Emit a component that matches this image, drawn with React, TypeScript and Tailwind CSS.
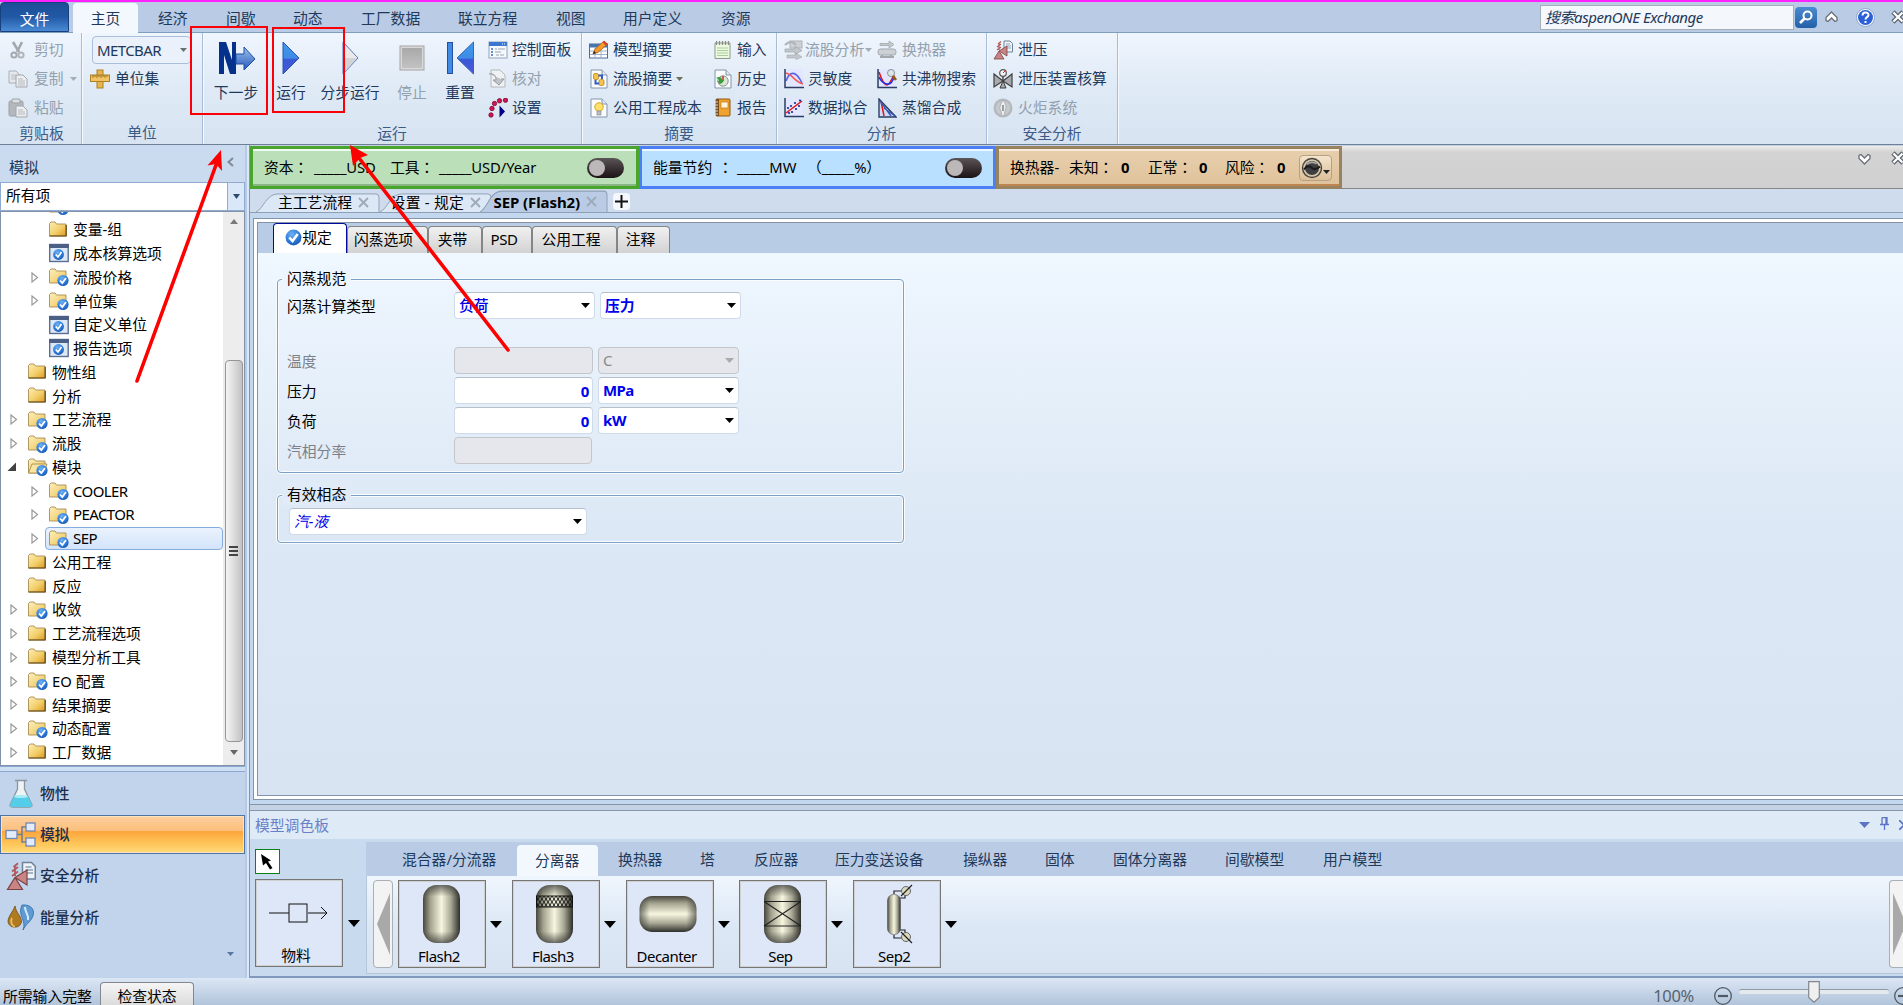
import React from "react";

type Kids = { children?: React.ReactNode };

/* ---------- small glyphs ---------- */

const Down = ({ c = "#000", w = 8, h = 5 }: { c?: string; w?: number; h?: number }) => (
  <svg width={w} height={h} viewBox="0 0 8 5" preserveAspectRatio="none" className="shrink-0">
    <path d="M0 0H8L4 5Z" fill={c} />
  </svg>
);

const Svg = ({ children, s = 20 }: Kids & { s?: number }) => (
  <svg width={s} height={s} viewBox="0 0 20 20" className="shrink-0">
    {children}
  </svg>
);

const Defs = () => (
  <svg width="0" height="0" className="absolute">
    <defs>
      <linearGradient id="folder" x1="0" y1="0" x2="1" y2="1">
        <stop offset="0" stopColor="#fdeeb5" />
        <stop offset=".55" stopColor="#f3cf6b" />
        <stop offset="1" stopColor="#dd9a1c" />
      </linearGradient>
      <linearGradient id="folderLight" x1="0" y1="0" x2="1" y2="1">
        <stop offset="0" stopColor="#fdf0bd" />
        <stop offset="1" stopColor="#ecc252" />
      </linearGradient>
      <radialGradient id="badge" cx=".4" cy=".3" r=".8">
        <stop offset="0" stopColor="#6fb2f3" />
        <stop offset=".6" stopColor="#2a78d8" />
        <stop offset="1" stopColor="#1650a8" />
      </radialGradient>
      <linearGradient id="play" x1="0" y1="0" x2="0" y2="1">
        <stop offset="0" stopColor="#3d9be8" />
        <stop offset=".5" stopColor="#3f8be6" />
        <stop offset=".55" stopColor="#3a58d4" />
        <stop offset="1" stopColor="#4a58d8" />
      </linearGradient>
      <linearGradient id="arrowBlue" x1="0" y1="0" x2="0" y2="1">
        <stop offset="0" stopColor="#9cc3f0" />
        <stop offset="1" stopColor="#2656b8" />
      </linearGradient>
      <linearGradient id="stop" x1="0" y1="0" x2="0" y2="1">
        <stop offset="0" stopColor="#a9a9a9" />
        <stop offset="1" stopColor="#c2c2c2" />
      </linearGradient>
      <linearGradient id="metalH" x1="0" y1="0" x2="1" y2="0">
        <stop offset="0" stopColor="#45453d" />
        <stop offset=".2" stopColor="#a3a38f" />
        <stop offset=".5" stopColor="#f7f7e0" />
        <stop offset=".75" stopColor="#a9a996" />
        <stop offset="1" stopColor="#2e2e2a" />
      </linearGradient>
      <linearGradient id="metalV" x1="0" y1="0" x2="0" y2="1">
        <stop offset="0" stopColor="#45453d" />
        <stop offset=".2" stopColor="#a3a38f" />
        <stop offset=".5" stopColor="#f7f7e0" />
        <stop offset=".75" stopColor="#a9a996" />
        <stop offset="1" stopColor="#2e2e2a" />
      </linearGradient>
      <linearGradient id="shadeEnds" x1="0" y1="0" x2="0" y2="1">
        <stop offset="0" stopColor="#222" stopOpacity=".65" />
        <stop offset=".2" stopColor="#222" stopOpacity="0" />
        <stop offset=".8" stopColor="#222" stopOpacity="0" />
        <stop offset="1" stopColor="#222" stopOpacity=".65" />
      </linearGradient>
      <linearGradient id="shadeSides" x1="0" y1="0" x2="1" y2="0">
        <stop offset="0" stopColor="#222" stopOpacity=".6" />
        <stop offset=".18" stopColor="#222" stopOpacity="0" />
        <stop offset=".82" stopColor="#222" stopOpacity="0" />
        <stop offset="1" stopColor="#222" stopOpacity=".6" />
      </linearGradient>
      <pattern id="mesh" width="4" height="6" patternUnits="userSpaceOnUse">
        <path d="M0 0L2 3L0 6M4 0L2 3L4 6" stroke="#111" strokeWidth=".9" fill="none" />
      </pattern>
    </defs>
  </svg>
);

/* ---------- ribbon icons ---------- */

const Cut = () => (
  <Svg>
    <path d="M5 2L11 12M14 2L9 12" stroke="#a3a8ad" strokeWidth="2.6" />
    <circle cx="6" cy="15" r="2.6" fill="none" stroke="#a3a8ad" strokeWidth="2" />
    <circle cx="13" cy="15" r="2.6" fill="none" stroke="#b1b5b9" strokeWidth="2" />
  </Svg>
);
const Copy = () => (
  <Svg>
    <path d="M1 2H8L11 5V14H1Z" fill="#e6e9ec" stroke="#a9afb5" />
    <path d="M3 6H8M3 8H8M3 10H8" stroke="#b9bec3" />
    <path d="M8 6H15L19 10V18H8Z" fill="#eceef0" stroke="#a2a8ae" />
    <path d="M10 10H15M10 12H17M10 14H17M10 16H17" stroke="#b4b9be" />
  </Svg>
);
const Paste = () => (
  <Svg>
    <rect x="1" y="3" width="14" height="15" rx="1.5" fill="#b4b8bc" stroke="#9a9fa4" />
    <rect x="4" y="1" width="8" height="4" rx="1" fill="#dcdfe2" stroke="#9a9fa4" />
    <path d="M8 8H15L19 12V19H8Z" fill="#eceef0" stroke="#a2a8ae" />
    <path d="M10 12H15M10 14H17M10 16H17" stroke="#b4b9be" />
  </Svg>
);
const Units = () => (
  <Svg>
    <rect x="7" y="1" width="6" height="18" fill="#e6b550" stroke="#b07f22" />
    <rect x="0.5" y="6" width="19" height="6.5" fill="#f0c465" stroke="#b07f22" />
    <path d="M3 6V9M5 6V8M7 6V9M9 6V8M11 6V9M13 6V8M15 6V9M17 6V8" stroke="#8b6214" strokeWidth=".8" />
  </Svg>
);
const Panel = () => (
  <Svg>
    <rect x="1" y="2" width="18" height="16" fill="#f5f8fd" stroke="#8fa3bf" />
    <rect x="1" y="2" width="18" height="4" fill="#3a77d0" />
    <path d="M14 4H15M16 4H17" stroke="#fff" />
    <path d="M3 9H5M3 12H5M3 15H5" stroke="#3c6cc0" strokeWidth="1.6" />
    <path d="M7 9H9M10 9H17M7 12H13M8 15H11M12 15H16" stroke="#9aa3ad" />
  </Svg>
);
const Reconcile = () => (
  <Svg>
    <path d="M3 1H12L17 6V18H3Z" fill="#eff1f3" stroke="#b3b8bd" />
    <path d="M1 5C6 4 8 7 8 11H5L11 16L16 10H13" fill="#c0c4c8" stroke="#989da2" />
  </Svg>
);
const Setup = () => (
  <Svg>
    <g fill="#d4145a" stroke="#7a0b2a" strokeWidth=".8">
      <circle cx="3" cy="17" r="2.2" />
      <circle cx="4" cy="10.5" r="2.2" />
      <circle cx="6.5" cy="5.5" r="2.2" />
      <circle cx="11.5" cy="2.8" r="2.2" />
      <circle cx="17.5" cy="2.2" r="2.2" />
    </g>
    <path d="M11.5 7.5L17 13.5L11.5 19.5Z" fill="#00007f" />
  </Svg>
);
const ModelSummary = () => (
  <Svg>
    <rect x="0.5" y="4" width="18" height="14" fill="#fff" stroke="#4a6d9a" />
    <rect x="0.5" y="4" width="18" height="3.5" fill="#4775b0" />
    <path d="M1 11H18M1 14.500H18M6 8V18M12 8V18" stroke="#9db3cf" />
    <path d="M4 14L6 9L15 1L18.500 4L9 12.500Z" fill="#f59a2a" stroke="#a8600f" strokeWidth=".8" />
    <path d="M15 1L18.500 4L17 5.500L13.500 2.300Z" fill="#d63a34" />
    <path d="M4 14L5 11L7 13Z" fill="#222" />
  </Svg>
);
const Page = ({ children }: Kids) => (
  <Svg>
    <path d="M2 1H13L18 6V19H2Z" fill="#fbfcfe" stroke="#8296ac" />
    <path d="M13 1V6H18" fill="#dfe7f0" stroke="#8296ac" />
    {children}
  </Svg>
);
const StreamSummary = () => (
  <Page>
    <rect x="4.500" y="4.500" width="5" height="6" rx="1.500" fill="#f6c445" stroke="#a87a18" strokeWidth=".7" />
    <rect x="10" y="10.500" width="5" height="6" rx="1.500" fill="#f6c445" stroke="#a87a18" strokeWidth=".7" />
    <path d="M9.500 6.500H13V10M10 14.500H6.500V11" fill="none" stroke="#3158c4" strokeWidth="2" />
  </Page>
);
const UtilityCost = () => (
  <Page>
    <circle cx="10" cy="9" r="4.200" fill="#ffe26b" stroke="#d9a520" />
    <rect x="8" y="13" width="4" height="4" fill="#b9bec6" stroke="#7c828a" strokeWidth=".6" />
  </Page>
);
const InputPad = () => (
  <Svg>
    <path d="M2 3H17V18.500H2Z" fill="#edf8e2" stroke="#8b9a86" />
    <path d="M4 8H15M4 10.500H15M4 13H15M4 15.500H15" stroke="#a8cf9b" />
    <path d="M3.500 5V1M6.500 5V1M9.500 5V1M12.500 5V1M15.500 5V1" stroke="#8d8d85" strokeWidth="1.200" />
  </Svg>
);
const History = () => (
  <Page>
    <circle cx="10" cy="12" r="5.200" fill="#d9e6d9" stroke="#8a9a8a" />
    <path d="M10 12V7M10 12L6 14" stroke="#c22" strokeWidth="1.400" />
    <path d="M3 9C6 7 9 8 9 11L11 11L8 15L4 12H6C6 10 5 10 3 9Z" fill="#2da33a" />
  </Page>
);
const Report = () => (
  <Svg>
    <rect x="3" y="1" width="14" height="17" rx="1" fill="#f0a22e" stroke="#8b5a17" />
    <rect x="3" y="1" width="3" height="17" fill="#7c4f1a" />
    <rect x="8" y="4" width="7" height="6" fill="#fff5dd" stroke="#c17a1c" strokeWidth=".7" />
    <path d="M2 4H5M2 7H5M2 10H5M2 13H5M2 16H5" stroke="#ddd" />
  </Svg>
);
const StreamAnalysis = () => (
  <Svg>
    <rect x="6" y="1" width="12" height="7" fill="#cdd1d5" stroke="#adb2b7" />
    <path d="M1 5C5 1 9 1 12 5" fill="none" stroke="#b0b4b8" strokeWidth="2" />
    <path d="M1 9H11V6.500L18 10.500L11 14.500V12H1Z" fill="#c4c8cc" stroke="#a3a8ad" strokeWidth=".8" />
    <path d="M3 15H12V13L18 17L12 19.500V18H3Z" fill="#c4c8cc" stroke="#a3a8ad" strokeWidth=".6" />
  </Svg>
);
const Exchanger = () => (
  <Svg>
    <path d="M3 3.500H12V1L17 4.500L12 8V5.500H3Z" fill="#c4c8cc" stroke="#a3a8ad" strokeWidth=".8" />
    <rect x="1" y="9" width="18" height="6" rx="2.500" fill="#cdd1d5" stroke="#a3a8ad" />
    <path d="M5 15V18M14 15V18M3 17H17" stroke="#a3a8ad" strokeWidth="2" />
  </Svg>
);
const Chart = ({ children }: Kids) => (
  <Svg>
    <rect x="1" y="0" width="18" height="18" fill="#e3e6ff" />
    {children}
    <path d="M1 0V18.500H20" fill="none" stroke="#2a3f63" strokeWidth="1.500" />
  </Svg>
);
const Sensitivity = () => (
  <Chart>
    <path d="M2 12C6 1 12 2 18 14" fill="none" stroke="#5a62e8" strokeWidth="1.600" />
    <path d="M2 4C8 5 11 13 19 15" fill="none" stroke="#f05a5a" strokeWidth="1.600" />
  </Chart>
);
const DataFit = () => (
  <Chart>
    <path d="M2 15L18 3" stroke="#e01414" strokeWidth="1.500" />
    <g fill="#1d2a9b">
      <circle cx="4" cy="10" r="1.100" />
      <circle cx="7" cy="8" r="1.100" />
      <circle cx="8" cy="14" r="1.100" />
      <circle cx="11" cy="5" r="1.100" />
      <circle cx="12" cy="11" r="1.100" />
      <circle cx="15" cy="8" r="1.100" />
      <circle cx="16" cy="2.500" r="1.100" />
      <circle cx="5" cy="15" r="1.100" />
    </g>
  </Chart>
);
const Azeotrope = () => (
  <Chart>
    <path d="M2 3C5 12 8 16 10 16C12 16 14 12 17 6" fill="none" stroke="#e01414" strokeWidth="1.600" />
    <path d="M2 8C5 15 15 20 17 7" fill="none" stroke="#2430e8" strokeWidth="1.600" />
    <circle cx="14" cy="4" r="3.500" fill="#d8e8e4" stroke="#8a8f96" />
    <path d="M16 7L19 11" stroke="#8a6314" strokeWidth="2.500" />
  </Chart>
);
const Distil = () => (
  <Svg>
    <path d="M2 1V19H19Z" fill="#cfdcf5" stroke="#2a3f63" strokeWidth="1.400" />
    <path d="M4 3L7 18" stroke="#e01414" strokeWidth="1.500" />
    <path d="M3 3L14 18M7 10L18 18" stroke="#3558b8" strokeWidth="1.300" />
  </Svg>
);
const Relief = ({ s = 20 }: { s?: number }) => (
  <Svg s={s}>
    <path d="M11 1H17L19.500 3.500V12H11Z" fill="#eef3f9" stroke="#6d8296" />
    <path d="M13 4H17M13 6H18M13 8H18" stroke="#8da0b4" strokeWidth=".9" />
    <path d="M4 10L8 7M4 7L8 4M5 4L8 1.500M6 10V3" stroke="#b15a5a" strokeWidth="1.200" />
    <path d="M6 11L14 6V16L6 11L11 19H1Z" fill="#c98585" stroke="#7d4242" strokeWidth=".8" />
  </Svg>
);
const ReliefCheck = () => (
  <Svg>
    <path d="M10 7V12" stroke="#444" strokeWidth="1.500" />
    <path d="M1 5L10 12L19 5V18L10 12L1 18Z" fill="#a9aaac" stroke="#3e3f41" strokeWidth="1.200" />
    <path d="M10 12L13 19H7Z" fill="#a9aaac" stroke="#3e3f41" />
    <circle cx="10" cy="4" r="3.300" fill="#f4f4f4" stroke="#555" strokeWidth="1.200" />
    <path d="M10 4L12 2" stroke="#d22" />
  </Svg>
);
const Flare = () => (
  <Svg>
    <circle cx="10" cy="10" r="9.500" fill="#b5b9bd" />
    <circle cx="10" cy="10" r="7" fill="#c6cacd" />
    <path d="M10 2C14 7 13 10 12 13L11 18H9L8 13C6 10 7 7 10 2Z" fill="#eceeef" stroke="#9ca1a6" strokeWidth=".7" />
    <path d="M10 7V13" stroke="#999ea3" strokeWidth="2" />
  </Svg>
);

/* ---------- ribbon ---------- */

const Small = ({
  icon,
  label,
  off,
  drop,
  gap = "gap-[5px]",
}: {
  icon: React.ReactNode;
  label: string;
  off?: boolean;
  drop?: boolean;
  gap?: string;
}) => (
  <div className={`flex h-[29px] items-center ${gap} ${off ? "text-[#93a0ad]" : "text-[#1e395b]"}`}>
    {icon}
    <span className="leading-none">{label}</span>
    {drop && <Down c={off ? "#a3adb7" : "#6b6f5f"} w={7} h={4} />}
  </div>
);

const Group = ({ label, w, children }: Kids & { label: string; w: string }) => (
  <div className={`flex h-full shrink-0 flex-col border-r border-r-[#a9bcd6] shadow-[1px_0_0_#f6faff] ${w}`}>
    <div className="flex h-[88px] pt-[2px]">{children}</div>
    <div className="text-center leading-[24px] text-[#3b5a86]">{label}</div>
  </div>
);

const Big = ({ icon, label, w, off }: { icon: React.ReactNode; label: string; w: string; off?: boolean }) => (
  <div className={`flex shrink-0 flex-col items-center ${w}`}>
    <div className="flex h-[44px] items-center pt-[2px]">{icon}</div>
    <span className={`whitespace-nowrap leading-[26px] ${off ? "text-[#93a0ad]" : "text-[#1e395b]"}`}>{label}</span>
  </div>
);

const NextIcon = () => (
  <svg width="40" height="34" viewBox="0 0 40 34">
    <path d="M3 1H10L16 19V1H20V33H14L8 14V33H3Z" fill="#05308c" />
    <path d="M20 13H28V6L39 18L28 29V23H20Z" fill="url(#arrowBlue)" stroke="#1c4da6" />
  </svg>
);
const PlayIcon = () => (
  <svg width="18" height="34" viewBox="0 0 18 34">
    <path d="M1 1L17 17L1 33Z" fill="url(#play)" stroke="#2b52b4" />
  </svg>
);
const StepIcon = () => (
  <svg width="18" height="34" viewBox="0 0 18 34">
    <path d="M2 1L17 17L2 33Z" fill="#e9e9ea" stroke="#5577c4" />
    <path d="M2 17H16L2 32Z" fill="#d3d3d6" />
  </svg>
);
const StopIcon = () => (
  <svg width="26" height="26" viewBox="0 0 26 26">
    <rect x="1" y="1" width="24" height="24" fill="#d9d9d9" stroke="#a5a5a5" />
    <rect x="3" y="3" width="20" height="20" fill="url(#stop)" />
  </svg>
);
const ResetIcon = () => (
  <svg width="29" height="34" viewBox="0 0 29 34">
    <rect x="1.500" y="1.500" width="5" height="31" fill="#3f8be6" stroke="#24509f" />
    <path d="M27.500 1L11 17L27.500 33Z" fill="url(#play)" stroke="#3b63bd" />
  </svg>
);

const Ribbon = () => (
  <div className="flex h-[112px] shrink-0 border-b border-b-[#6f7f95] bg-gradient-to-b from-[#eff5fd] via-[#dfeaf6] to-[#d7e3f1]">
    <Group label="剪贴板" w="w-[82px] pl-[2px]">
      <div className="pl-[6px]">
        <Small icon={<Cut />} label="剪切" off gap="gap-[6px]" />
        <Small icon={<Copy />} label="复制" off drop gap="gap-[6px]" />
        <Small icon={<Paste />} label="粘贴" off gap="gap-[6px]" />
      </div>
    </Group>
    <Group label="单位" w="w-[121px]">
      <div className="pl-[8px]">
        <div className="ml-[2px] mt-[1px] flex h-[28px] w-[99px] items-center justify-between rounded-sm border border-[#a9bedb] bg-[#eaf1fa] pl-[4px] pr-[3px] text-[15px] tracking-[-0.6px] text-[#1e395b]">
          METCBAR
          <Down c="#6b6f6f" w={7} h={4} />
        </div>
        <Small icon={<Units />} label="单位集" />
      </div>
    </Group>
    <Group label="运行" w="w-[379px]">
      <Big w="ml-[3px] w-[60px]" icon={<NextIcon />} label="下一步" />
      <Big w="ml-[9px] w-[32px]" icon={<PlayIcon />} label="运行" />
      <Big w="ml-[13px] w-[60px]" icon={<StepIcon />} label="分步运行" />
      <Big w="ml-[15px] w-[34px]" icon={<StopIcon />} label="停止" off />
      <Big w="ml-[14px] w-[34px]" icon={<ResetIcon />} label="重置" />
      <div className="ml-[11px]">
        <Small icon={<Panel />} label="控制面板" gap="gap-1" />
        <Small icon={<Reconcile />} label="核对" off gap="gap-1" />
        <Small icon={<Setup />} label="设置" gap="gap-1" />
      </div>
    </Group>
    <Group label="摘要" w="w-[195px]">
      <div className="w-[124px] pl-[7px]">
        <Small icon={<ModelSummary />} label="模型摘要" gap="gap-1" />
        <Small icon={<StreamSummary />} label="流股摘要" drop gap="gap-1" />
        <Small icon={<UtilityCost />} label="公用工程成本" gap="gap-1" />
      </div>
      <div className="pl-[7px]">
        <Small icon={<InputPad />} label="输入" gap="gap-1" />
        <Small icon={<History />} label="历史" gap="gap-1" />
        <Small icon={<Report />} label="报告" gap="gap-1" />
      </div>
    </Group>
    <Group label="分析" w="w-[210px]">
      <div className="w-[100px] pl-[7px]">
        <Small icon={<StreamAnalysis />} label="流股分析" off drop gap="gap-px" />
        <Small icon={<Sensitivity />} label="灵敏度" gap="gap-1" />
        <Small icon={<DataFit />} label="数据拟合" gap="gap-1" />
      </div>
      <div>
        <Small icon={<Exchanger />} label="换热器" off />
        <Small icon={<Azeotrope />} label="共沸物搜索" />
        <Small icon={<Distil />} label="蒸馏合成" />
      </div>
    </Group>
    <Group label="安全分析" w="w-[131px]">
      <div className="pl-[6px]">
        <Small icon={<Relief />} label="泄压" />
        <Small icon={<ReliefCheck />} label="泄压装置核算" />
        <Small icon={<Flare />} label="火炬系统" off />
      </div>
    </Group>
  </div>
);

const Cross = ({ w = 14 }: { w?: number }) => (
  <svg width={w} height={w} viewBox="0 0 14 14" className="shrink-0">
    <path d="M2 2L12 12M12 2L2 12" stroke="#5f6670" strokeWidth="4.600" />
    <path d="M2.500 2.500L11.500 11.500M11.500 2.500L2.500 11.500" stroke="#fff" strokeWidth="2.200" />
  </svg>
);
const Chevron = ({ down }: { down?: boolean }) => (
  <svg width="13" height="12" viewBox="0 0 13 12" className={down ? "shrink-0 rotate-180" : "shrink-0"}>
    <path d="M6.500 1L12 6.500V9.500L10 10.500L6.500 7L3 10.500L1 9.500V6.500Z" fill="#fff" stroke="#6a6f78" strokeWidth="1.300" />
  </svg>
);

const TabBar = () => (
  <div className="flex h-[31px] shrink-0 border-b border-b-[#7f9dbf] bg-[#bacce5] text-[#1e395b]">
    <div className="h-[30px] w-[69px] rounded-t-sm border border-[#17407e] bg-gradient-to-b from-[#1d4e96] via-[#2159a6] to-[#4a8ad4] pt-px text-center leading-[30px] text-white">
      文件
    </div>
    <div className="ml-1 mt-px h-[30px] w-[65px] rounded-t-sm bg-[#f3f8fe] text-center leading-[31px]">主页</div>
    <div className="flex whitespace-nowrap leading-[33px]">
      <span className="ml-[20px] w-[68px]">经济</span>
      <span className="w-[67px]">间歇</span>
      <span className="w-[68px]">动态</span>
      <span className="w-[97px]">工厂数据</span>
      <span className="w-[98px]">联立方程</span>
      <span className="w-[67px]">视图</span>
      <span className="w-[98px]">用户定义</span>
      <span>资源</span>
    </div>
    <div className="ml-auto flex items-center">
      <div className="mt-px h-[25px] w-[254px] border border-[#a7adb5] bg-[#f4f7fb] pl-[4px] text-[15px] italic leading-[22px] tracking-[-0.45px]">
        搜索aspenONE Exchange
      </div>
      <div className="ml-px flex h-[21px] w-[22px] items-center justify-center rounded-sm bg-gradient-to-b from-[#4b8bd0] to-[#2460a8]">
        <svg width="16" height="16" viewBox="0 0 16 16">
          <circle cx="9.500" cy="6.500" r="4" fill="none" stroke="#fff" strokeWidth="2" />
          <path d="M6.500 9.500L2 14" stroke="#fff" strokeWidth="2.600" />
        </svg>
      </div>
      <div className="ml-[8px] flex">
        <Chevron />
      </div>
      <svg width="19" height="19" viewBox="0 0 19 19" className="ml-[18px]">
        <circle cx="9.500" cy="9.500" r="9" fill="#fff" stroke="#8aa4d4" />
        <circle cx="9.500" cy="9.500" r="7.500" fill="#2a5fd8" />
        <path d="M6.500 7.500C6.500 3.500 12.500 3.500 12.500 7C12.500 9.200 9.500 9 9.500 11.500M9.500 13V15" fill="none" stroke="#fff" strokeWidth="2" />
      </svg>
      <div className="-mr-[2px] ml-[16px] -mt-px">
        <Cross />
      </div>
    </div>
  </div>
);

/* ---------- navigation tree ---------- */

const Badge = () => (
  <g>
    <circle cx="14" cy="13.500" r="5.600" fill="url(#badge)" />
    <path d="M11 13.500L13.300 16L17 11" fill="none" stroke="#fff" strokeWidth="1.800" />
  </g>
);

const TreeIcon = ({ kind }: { kind: string }) => (
  <svg width="20" height="20" viewBox="0 0 20 20" className="shrink-0">
    {kind === "form" ? (
      <g>
        <rect x=".7" y="1.500" width="18.500" height="17" fill="#dde8f7" stroke="#5b6f92" strokeWidth="1.400" />
        <rect x="0" y="1" width="20" height="4" fill="#4c6086" />
        <circle cx="9.500" cy="11.500" r="5.400" fill="url(#badge)" />
        <path d="M6.700 11.500L9 14L12.500 9" fill="none" stroke="#fff" strokeWidth="1.700" />
      </g>
    ) : (
      <g>
        <path
          d="M.5 3.500L2 2H6L7.500 4H17V16H.5Z"
          fill={kind === "plain" ? "url(#folder)" : "url(#folderLight)"}
          stroke="#a98d52"
          strokeWidth=".9"
        />
        {kind === "plain" && <path d="M.5 16H17.200V5" fill="none" stroke="#5d4413" strokeWidth="1.200" />}
        {kind === "open" && <path d="M.5 16L4 7H19L16 16Z" fill="#fbe6a0" stroke="#a98d52" strokeWidth=".9" />}
        {kind !== "plain" && <Badge />}
      </g>
    )}
  </svg>
);

type Node = [level: number, mark: string, kind: string, label: string];
const NODES: Node[] = [
  [2, "", "check", ""],
  [2, "", "plain", "变量-组"],
  [2, "", "form", "成本核算选项"],
  [2, ">", "check", "流股价格"],
  [2, ">", "check", "单位集"],
  [2, "", "form", "自定义单位"],
  [2, "", "form", "报告选项"],
  [1, "", "plain", "物性组"],
  [1, "", "plain", "分析"],
  [1, ">", "check", "工艺流程"],
  [1, ">", "check", "流股"],
  [1, "v", "open", "模块"],
  [2, ">", "check", "COOLER"],
  [2, ">", "check", "PEACTOR"],
  [2, ">", "check", "SEP"],
  [1, "", "plain", "公用工程"],
  [1, "", "plain", "反应"],
  [1, ">", "check", "收敛"],
  [1, ">", "plain", "工艺流程选项"],
  [1, ">", "plain", "模型分析工具"],
  [1, ">", "check", "EO 配置"],
  [1, ">", "plain", "结果摘要"],
  [1, ">", "check", "动态配置"],
  [1, ">", "plain", "工厂数据"],
];

const Tree = () => (
  <div className="flex h-[555px] shrink-0 overflow-hidden border border-[#8292a8] bg-white">
    <div className="-mt-[18px] w-[222px] shrink-0">
      {NODES.map(([level, mark, kind, label], i) => (
        <div key={i} className="flex h-[23.78px] items-center">
          <div className={level === 1 ? "flex w-[24px] shrink-0 pl-[9px]" : "flex w-[44px] shrink-0 pl-[30px]"}>
            {mark === ">" && (
              <svg width="8" height="11" viewBox="0 0 8 11">
                <path d="M1 1L6.500 5.500L1 10Z" fill="#fff" stroke="#9a9a9a" strokeWidth="1.200" />
              </svg>
            )}
            {mark === "v" && (
              <svg width="10" height="10" viewBox="0 0 10 10" className="-ml-[3px]">
                <path d="M9 0.500V9H0.500Z" fill="#404040" />
              </svg>
            )}
          </div>
          <div
            className={
              label === "SEP"
                ? "flex h-[23px] flex-1 items-center gap-[4px] rounded-sm border border-[#84acdd] bg-gradient-to-b from-[#eaf2fd] to-[#d3e4fb] pl-[3px]"
                : level === 2
                  ? "flex flex-1 items-center gap-[4px] pl-[4px]"
                  : "flex flex-1 items-center gap-[4px] pl-[3px]"
            }
          >
            <TreeIcon kind={kind} />
            <span className={/^[A-Z]+$/.test(label) ? "text-[15px] leading-none tracking-[-0.6px]" : "leading-none"}>
              {label}
            </span>
          </div>
        </div>
      ))}
    </div>
    <div className="flex flex-1 flex-col items-center bg-[#ededed]">
      <div className="flex h-[148px] pt-[7px]">
        <svg width="8" height="5" viewBox="0 0 8 5">
          <path d="M0 5H8L4 0Z" fill="#7a7a7a" />
        </svg>
      </div>
      <div className="flex h-[382px] w-[18px] flex-col items-center justify-center gap-[2px] rounded-sm border border-[#959595] bg-gradient-to-r from-[#f5f5f5] via-[#dcdcdc] to-[#c2c2c6]">
        <i className="h-[2px] w-[9px] bg-[#444]" />
        <i className="h-[2px] w-[9px] bg-[#444]" />
        <i className="h-[2px] w-[9px] bg-[#444]" />
      </div>
      <div className="pt-[8px]">
        <Down c="#666" w={8} h={5} />
      </div>
    </div>
  </div>
);

const Flask = () => (
  <svg width="24" height="29" viewBox="0 0 24 29">
    <path d="M6 1.500H18M8.500 2V10L1 26Q1 28 4 28H20Q23 28 23 26L15.500 10V2" fill="#eef3f6" stroke="#8b979f" strokeWidth="1.300" />
    <path d="M5 17H19L23 26Q23 28 20 28H4Q1 28 1 26Z" fill="#53cdea" />
    <ellipse cx="12" cy="17.500" rx="7" ry="1.600" fill="#a8ebf8" />
  </svg>
);
const FlowIcon = () => (
  <svg width="31" height="25" viewBox="0 0 31 25">
    <path d="M12 12.500H17V5H22M17 12.500V20H22" fill="none" stroke="#6f7f95" strokeWidth="1.500" />
    <rect x="1" y="8.500" width="11" height="8" fill="#e4ecfb" stroke="#6f88b4" strokeWidth="1.300" />
    <rect x="21" y="1" width="9" height="8" fill="#e4ecfb" stroke="#6f88b4" strokeWidth="1.300" />
    <rect x="21" y="16" width="9" height="8" fill="#e4ecfb" stroke="#6f88b4" strokeWidth="1.300" />
  </svg>
);
const EnergyIcon = () => (
  <svg width="28" height="27" viewBox="0 0 28 27">
    <path d="M8 2C6 8 1 12 1 18A7 7 0 0 0 14.500 18C14.500 12 9 9 8 2Z" fill="#b07a1e" stroke="#6e4a0e" strokeWidth=".8" />
    <path d="M5 14C3 18 5 22 8 23" fill="none" stroke="#e8bd6a" strokeWidth="1.800" />
    <path d="M15 1C25 0 29 7 25 14C23 18 19 20 16 26C20 16 10 12 15 1Z" fill="#5f9bd2" stroke="#2f6aa8" strokeWidth=".8" />
    <path d="M18 3C18 9 22 10 21 16" fill="none" stroke="#d5eafc" strokeWidth="2" />
  </svg>
);

const NavItem = ({ icon, label, h, active }: { icon: React.ReactNode; label: string; h: string; active?: boolean }) => (
  <div
    className={`flex shrink-0 items-center font-medium text-[#1b2f4d] ${h} ${
      active
        ? "border border-[#4f74a8] bg-[linear-gradient(#fccfa0,#fdbf7b_40%,#fda63c_42%,#fec155_70%,#ffdb78)] shadow-[inset_0_0_0_1px_#fbe3c0]"
        : "border border-transparent"
    }`}
  >
    <div className="flex w-[39px] items-center justify-center">{icon}</div>
    <span className="leading-none">{label}</span>
  </div>
);

const Sidebar = () => (
  <div className="flex w-[249px] shrink-0 border-r-2 border-r-[#dce8f7] bg-[#b4cae6]">
    <div className="flex w-[245px] flex-col bg-[#c2d4ec]">
      <div className="flex h-[37px] items-center justify-between bg-[#cadaef] pl-[9px] pr-[11px] pt-[7px] text-[#1e395b]">
        <span className="text-[15px] leading-none">模拟</span>
        <svg width="7" height="10" viewBox="0 0 7 10" className="mb-[10px]">
          <path d="M6 1L1.500 5L6 9" fill="none" stroke="#808a98" strokeWidth="2" />
        </svg>
      </div>
      <div className="flex h-[29px] shrink-0 border border-[#8fabd0] bg-white">
        <span className="flex-1 pl-[5px] leading-[25px]">所有项</span>
        <div className="flex w-[17px] items-center justify-center border-l border-l-[#8fabd0] bg-[#d9e7f8]">
          <Down c="#2f4a70" w={7} h={5} />
        </div>
      </div>
      <Tree />
      <div className="h-[6px] shrink-0 border-y border-[#8aa7d0] bg-[#cfdff3]" />
      <NavItem icon={<Flask />} label="物性" h="h-[43px]" />
      <NavItem icon={<FlowIcon />} label="模拟" h="h-[39px]" active />
      <NavItem icon={<Relief s={30} />} label="安全分析" h="h-[43px]" />
      <NavItem icon={<EnergyIcon />} label="能量分析" h="h-[41px]" />
      <div className="flex justify-end pr-[11px] pt-[14px]">
        <Down c="#5577a4" w={7} h={4} />
      </div>
    </div>
  </div>
);

/* ---------- activated analysis bar ---------- */

const Toggle = () => (
  <div className="flex h-[20px] w-[37px] shrink-0 items-center rounded-full bg-gradient-to-b from-[#5c5558] to-[#1c1315] pl-[2px]">
    <div className="h-[16px] w-[16px] rounded-full bg-[#bcb7b9]" />
  </div>
);

/* Full-width colon with the mark centred in its cell */
const Colon = () => <span className="font-['Noto_Sans_CJK_TC',sans-serif]">：</span>;

const AnalysisBar = () => (
  <div className="flex h-[43px] shrink-0 border-b border-b-[#878787] bg-gradient-to-b from-[#eeeaea] via-[#d3d3d3] via-15% to-[#d0d0d0]">
    <div className="flex h-[43px] w-[389px] items-center whitespace-pre border-[3px] border-[#4aa52c] bg-[#bbe0b9] pl-[11px] pr-[12px] leading-none shadow-[inset_0_2px_0_#f0faf0,inset_0_-2px_0_#87b583]">
      <span className="w-[50px]">
        资本
        <Colon />
      </span>
      <span className="w-[76px] tracking-[-0.1px]">_____USD</span>
      <span className="w-[49px]">
        工具
        <Colon />
      </span>
      <span className="tracking-[-0.1px]">_____USD/Year</span>
      <div className="ml-auto">
        <Toggle />
      </div>
    </div>
    <div className="flex h-[43px] w-[357px] items-center whitespace-pre border-[3px] border-[#4a7ff5] bg-[#bae0ff] pl-[11px] pr-[11px] leading-none shadow-[inset_0_2px_0_#eef7ff]">
      <span className="w-[65px]">能量节约</span>
      <span className="w-[19px]">
        <Colon />
      </span>
      <span className="w-[70px] tracking-[-0.1px]">_____MW</span>
      <span>（</span>
      <span className="tracking-[-0.1px]">_____%</span>
      <span>）</span>
      <div className="ml-auto">
        <Toggle />
      </div>
    </div>
    <div className="flex h-[43px] w-[346px] items-center whitespace-pre border-[3px] border-[#99835e] bg-gradient-to-b from-[#e8cfad] to-[#dfc29b] pl-[11px] pr-[7px] leading-none shadow-[inset_0_2px_0_#f7ecdb,inset_0_-2px_0_#bd8551]">
      <span className="w-[59px]">换热器-</span>
      <span className="w-[52px]">
        未知
        <Colon />
      </span>
      <b className="w-[27px]">0</b>
      <span className="w-[51px]">
        正常
        <Colon />
      </span>
      <b className="w-[26px]">0</b>
      <span className="w-[52px]">
        风险
        <Colon />
      </span>
      <b>0</b>
      <div className="ml-auto flex h-[26px] w-[33px] items-end rounded-sm border border-[#b7a184] bg-gradient-to-b from-[#f3e4cc] to-[#dcbf98] p-px">
        <svg width="22" height="22" viewBox="0 0 22 22">
          <circle cx="11" cy="11" r="9.500" fill="#d6c6ac" stroke="#4b443a" strokeWidth="1.400" />
          <circle cx="11" cy="11" r="7" fill="#3e3e40" />
          <path d="M3 12.500C6 8 9 9 11 11C13 13 16 12 19 9.500" fill="none" stroke="#1a1a1a" strokeWidth="2" />
          <path d="M6 7.500C8 5 13 4.500 15.500 7" fill="none" stroke="#a9a9a9" strokeWidth="1.600" />
        </svg>
        <div className="mb-[5px]">
          <Down c="#222" w={7} h={4} />
        </div>
      </div>
    </div>
    <div className="ml-auto flex items-start pt-[5px]">
      <div className="mt-[2px] flex">
        <Chevron down />
      </div>
      <div className="-mr-[2px] ml-[20px]">
        <Cross />
      </div>
    </div>
  </div>
);

/* ---------- document tabs ---------- */

const TabClose = () => (
  <svg width="11" height="11" viewBox="0 0 11 11" className="shrink-0">
    <path d="M1 1L10 10M10 1L1 10" stroke="#9fabbb" strokeWidth="2" />
  </svg>
);

const DocTab = ({
  w,
  width,
  active,
  children,
}: Kids & { w: string; width: number; active?: boolean }) => (
  <div className={`relative flex shrink-0 items-center justify-end ${w} ${active ? "h-[22px]" : "h-[19px]"}`}>
    <svg
      width={width}
      height={active ? 22 : 19}
      viewBox={`0 0 ${width} 20`}
      preserveAspectRatio="none"
      className="absolute inset-0"
    >
      <path
        d={`M0 20C8 16 10 1 22 1H${width - 4}Q${width - 1} 1 ${width - 1} 5V20`}
        fill={active ? "#bacce5" : "#dde8f6"}
        stroke="#8f9fb5"
      />
    </svg>
    <div className="relative flex items-center gap-[6px] pr-[11px]">
      {children}
      <TabClose />
    </div>
  </div>
);

const DocTabs = () => (
  <div className="flex h-[24px] shrink-0 items-end border-b border-b-[#8f9fb5] bg-[#cfdcee] pl-[6px]">
    <DocTab w="w-[124px]" width={124}>
      <span className="leading-none">主工艺流程</span>
    </DocTab>
    <DocTab w="w-[112px]" width={112}>
      <span className="whitespace-pre leading-none tracking-[0.25px]">设置 - 规定</span>
    </DocTab>
    <DocTab w="-ml-[12px] w-[128px]" width={128} active>
      <b className="whitespace-nowrap pt-[2px] text-[15px] leading-none tracking-[-0.1px]">SEP (Flash2)</b>
    </DocTab>
    <div className="mb-[2px] ml-[5px] flex h-[17px] w-[17px] items-center justify-center rounded-sm bg-[#f4f8fd]">
      <svg width="13" height="13" viewBox="0 0 13 13">
        <path d="M6.500 0V13M0 6.500H13" stroke="#111" strokeWidth="2" />
      </svg>
    </div>
  </div>
);

/* ---------- form ---------- */

const FormTab = ({ children, w }: Kids & { w: string }) => (
  <div
    className={`mt-[3px] h-[27px] rounded-t-sm border border-b-0 border-[#858585] bg-gradient-to-b from-[#f1f1f1] to-[#d2d2d2] text-center leading-[24px] ${w}`}
  >
    {children}
  </div>
);

const Combo = ({
  w,
  children,
  off,
  style = "font-bold",
}: Kids & { w: string; off?: boolean; style?: string }) => (
  <div
    className={`flex h-[27px] shrink-0 items-center justify-between rounded-sm border px-[4px] ${w} ${
      off
        ? "border-[#c3c6ca] bg-[#e6e7ec] text-[#8a8a8a]"
        : "border-[#cfdbe8] border-t-[#b6bfc9] bg-white text-[#0000ee] " + style
    }`}
  >
    <span className="leading-none">{children}</span>
    <Down c={off ? "#aaa" : "#000"} w={9} h={5} />
  </div>
);

const Field = ({ w, children, off }: Kids & { w: string; off?: boolean }) => (
  <div
    className={`h-[27px] shrink-0 rounded-sm border pr-[3px] text-right text-[15px] font-bold leading-[27px] tracking-[-0.3px] text-[#0000ee] ${w} ${
      off ? "border-[#c3c6ca] bg-[#e6e7ec]" : "border-[#cfdbe8] border-t-[#b6bfc9] bg-white"
    }`}
  >
    {children}
  </div>
);

const Row = ({ label, off, children }: Kids & { label: string; off?: boolean }) => (
  <div className="flex h-[30px] items-start">
    <span className={`w-[167px] shrink-0 pl-0 leading-[28px] ${off ? "text-[#7c8189]" : ""}`}>{label}</span>
    {children}
  </div>
);

const Box = ({ legend, legendBg, children, h }: Kids & { legend: string; legendBg: string; h: string }) => (
  <div
    className={`w-[627px] rounded-[4px] border border-[#7c9fc6] shadow-[0_0_0_1px_#f8fcff,inset_0_0_0_1px_#f8fcff] ${h}`}
  >
    <div className={`-mt-[13px] ml-[4px] w-fit px-[5px] leading-[22px] ${legendBg}`}>{legend}</div>
    {children}
  </div>
);

const FormArea = () => (
  <div className="flex h-[592px] shrink-0 border-b border-b-[#8493a8] bg-[#c3d7ee] pb-[4px] pl-[3px] pt-[5px]">
    <div className="flex flex-1 flex-col border border-r-0 border-[#8493a8] bg-white pb-[3px] pl-[3px] pt-[3px]">
      <div className="flex flex-1 flex-col border border-r-0 border-[#8493a8]">
        <div className="flex h-[30px] shrink-0 bg-[#b9cce5] pl-[15px]">
          <div className="flex h-[30px] w-[74px] items-center justify-center rounded-t-sm border border-b-0 border-[#000a9b] bg-white pb-[2px] pr-[3px]">
            <svg width="17" height="17" viewBox="8 7.500 12 12">
              <Badge />
            </svg>
            <span className="leading-none">规定</span>
          </div>
          <FormTab w="w-[81px] pr-[8px]">闪蒸选项</FormTab>
          <FormTab w="w-[54px] pr-[5px]">夹带</FormTab>
          <FormTab w="w-[50px] pr-[6px] text-[15px] tracking-[-0.4px]">PSD</FormTab>
          <FormTab w="w-[85px] pr-[7px]">公用工程</FormTab>
          <FormTab w="w-[53px] pr-[6px]">注释</FormTab>
        </div>
        <div className="flex-1 bg-gradient-to-b from-[#eff7ff] via-[#dce8f5] to-[#d8e4f2] pl-[19px] pt-[26px]">
          <Box legend="闪蒸规范" legendBg="bg-[#edf5fe]" h="h-[194px]">
            <div className="pl-[9px] pt-[3px]">
              <Row label="闪蒸计算类型">
                <Combo w="w-[141px]" style="font-medium">
                  负荷
                </Combo>
                <Combo w="ml-[5px] w-[141px]">压力</Combo>
              </Row>
              <div className="h-[25px]" />
              <Row label="温度" off>
                <Field w="w-[139px]" off />
                <Combo w="ml-[5px] w-[141px]" off>
                  <span className="text-[15px]">C</span>
                </Combo>
              </Row>
              <Row label="压力">
                <Field w="w-[139px]">0</Field>
                <Combo w="ml-[5px] w-[141px]">
                  <span className="text-[15px] tracking-[-0.6px]">MPa</span>
                </Combo>
              </Row>
              <Row label="负荷">
                <Field w="w-[139px]">0</Field>
                <Combo w="ml-[5px] w-[141px]">
                  <span className="text-[15px] tracking-[-0.4px]">kW</span>
                </Combo>
              </Row>
              <Row label="汽相分率" off>
                <Field w="w-[138px]" off />
              </Row>
            </div>
          </Box>
          <div className="h-[22px]" />
          <Box legend="有效相态" legendBg="bg-[#e0ebf7]" h="h-[48px]">
            <div className="pl-[11px] pt-[3px]">
              <Combo w="w-[298px]" style="italic">
                汽-液
              </Combo>
            </div>
          </Box>
        </div>
      </div>
    </div>
  </div>
);

/* ---------- model palette ---------- */

const Vessel = ({ kind }: { kind: string }) => {
  if (kind === "Decanter")
    return (
      <svg width="60" height="60" viewBox="0 0 60 60">
        <rect x="1.500" y="12" width="57" height="36" rx="13" fill="url(#metalV)" />
        <rect x="1.500" y="12" width="57" height="36" rx="13" fill="url(#shadeSides)" />
      </svg>
    );
  if (kind === "Sep2")
    return (
      <svg width="60" height="60" viewBox="0 0 60 60">
        <path d="M28 10V7H35M33 14H39V10M28 51V54H36M33 46H39V50" fill="none" stroke="#222" strokeWidth="1.200" />
        <rect x="21.500" y="10.500" width="13" height="40" rx="6" fill="url(#metalH)" stroke="#555" strokeWidth=".6" />
        <circle cx="40" cy="7" r="4.500" fill="#d9d9c0" stroke="#666" />
        <circle cx="40" cy="53" r="4.500" fill="#d9d9c0" stroke="#666" />
        <path d="M35 12L46 1M35 48L46 59" stroke="#222" strokeWidth="1.200" />
      </svg>
    );
  return (
    <svg width="60" height="60" viewBox="0 0 60 60">
      <rect x="12" y="1" width="37" height="58" rx="14" fill="url(#metalH)" />
      <rect x="12" y="1" width="37" height="58" rx="14" fill="url(#shadeEnds)" />
      {kind === "Flash3" && <rect x="12.500" y="12" width="36" height="11" fill="url(#mesh)" stroke="#111" />}
      {kind === "Sep" && (
        <path d="M12 17.500H49M12 42H49M12 17.500L49 42M49 17.500L12 42" fill="none" stroke="#222" strokeWidth="1.100" />
      )}
    </svg>
  );
};

const Card = ({ children, label, latin }: Kids & { label: string; latin?: boolean }) => (
  <div className="flex h-[88px] w-[88px] shrink-0 flex-col items-center border border-[#767676] bg-[#dde7f8] pr-[3px] shadow-[inset_0_0_0_1px_#d0d0d0]">
    <div className="flex h-[66px] items-center">{children}</div>
    <span className={`pr-[3px] leading-[18px] ${latin ? "text-[15px] tracking-[-0.55px]" : ""}`}>{label}</span>
  </div>
);

const PALETTE_TABS: [string, string][] = [
  ["换热器", "w-[82px] pl-[20px]"],
  ["塔", "w-[54px] pl-[20px]"],
  ["反应器", "w-[81px] pl-[20px]"],
  ["压力变送设备", "w-[128px] pl-[20px]"],
  ["操纵器", "w-[82px] pl-[20px]"],
  ["固体", "w-[68px] pl-[20px]"],
  ["固体分离器", "w-[112px] pl-[20px]"],
  ["间歇模型", "w-[98px] pl-[20px]"],
  ["用户模型", "w-[100px] pl-[20px]"],
];

const Palette = () => (
  <div className="flex h-[168px] shrink-0 flex-col border-b-2 border-t border-b-[#8299be] border-t-[#8a96a8] bg-[#c8daed]">
    <div className="flex h-[28px] shrink-0 items-center bg-[#deebf7] pl-[5px] text-[#6a80c6]">
      <span className="leading-none">模型调色板</span>
      <div className="ml-auto flex items-center gap-[10px]">
        <Down c="#5b74c6" w={11} h={6} />
        <svg width="9" height="13" viewBox="0 0 9 13" className="-mt-[4px]">
          <path d="M2 .5H7V7.500M2 .5V7.500M6 1V7M0 7.500H9M4.500 8V13" fill="none" stroke="#5b74c6" strokeWidth="1.300" />
        </svg>
        <svg width="4" height="10" viewBox="0 0 4 10">
          <path d="M0 0L5 5L0 10" fill="none" stroke="#5b74c6" strokeWidth="1.800" />
        </svg>
      </div>
    </div>
    <div className="flex flex-1 pt-[3px]">
      <div className="w-[116px] shrink-0 pl-[5px] pt-[7px]">
        <div className="flex h-[25px] w-[25px] items-center justify-center border border-[#0c7f18] bg-white">
          <svg width="15" height="17" viewBox="0 0 15 17">
            <path d="M1 1L11 7.500L8 8.500L12.500 15L10 16.500L6 10L3 12.500Z" fill="#000" />
          </svg>
        </div>
        <div className="mt-[5px] flex items-center gap-[5px]">
          <Card label="物料">
            <svg width="60" height="22" viewBox="0 0 60 22">
              <path d="M1 11H21M40 11H58M53 5L59 11L53 17" fill="none" stroke="#111" />
              <rect x="21" y="2" width="18" height="18" fill="none" stroke="#111" />
            </svg>
          </Card>
          <Down w={12} h={7} />
        </div>
      </div>
      <div className="flex min-w-0 flex-1 flex-col">
        <div className="flex h-[34px] shrink-0 items-end whitespace-nowrap bg-[#bacce5] leading-[33px] text-[#1e395b]">
          <span className="w-[151px] pl-[36px]">混合器/分流器</span>
          <span className="h-[31px] w-[81px] rounded-t-sm bg-[#f3f8fe] pl-[18px] leading-[30px]">分离器</span>
          {PALETTE_TABS.map(([t, c]) => (
            <span key={t} className={c}>
              {t}
            </span>
          ))}
        </div>
        <div className="mb-[2px] flex flex-1 border-b border-l border-[#b6c6da] bg-gradient-to-b from-[#f0f6fd] via-[#dce8f5] to-[#d7e3f1] pl-[6px] pt-[4px]">
          <div className="flex h-[88px] w-[20px] items-center justify-center rounded-sm border border-[#a9afb6] bg-[#f3f3f3]">
            <svg width="13" height="62" viewBox="0 0 13 62">
              <path d="M13 0V62L0 31Z" fill="#a9a9a9" />
            </svg>
          </div>
          {["Flash2", "Flash3", "Decanter", "Sep", "Sep2"].map((k) => (
            <div key={k} className="ml-[5px] flex h-[88px] w-[108.800px] items-center gap-[4px]">
              <Card label={k} latin>
                <Vessel kind={k} />
              </Card>
              <Down w={12} h={7} />
            </div>
          ))}
          <div className="ml-auto flex h-[88px] w-[14px] items-center overflow-hidden rounded-l-sm border border-r-0 border-[#a9afb6] bg-[#f3f3f3] pl-[3px]">
            <svg width="13" height="62" viewBox="0 0 13 62" className="shrink-0">
              <path d="M0 0L13 31L0 62Z" fill="#a9a9a9" />
            </svg>
          </div>
        </div>
      </div>
    </div>
  </div>
);

const StatusBar = () => (
  <div className="flex h-[27px] shrink-0 overflow-hidden bg-gradient-to-b from-[#dce7f5] to-[#b1c4da]">
    <span className="ml-[3px] mt-[9px] w-[97px] leading-[18px]">所需输入完整</span>
    <div className="mt-[4px] h-[23px] w-[94px] rounded-t-[4px] border border-b-0 border-[#828790] bg-gradient-to-b from-[#f5f5f5] to-[#dcdcdc] pt-[4px] text-center leading-[18px]">
      检查状态
    </div>
    <div className="ml-auto flex items-center text-[#566370]">
      <span className="mt-[9px] text-[16.5px] leading-[18px] tracking-[-0.3px]">100%</span>
      <svg width="18" height="18" viewBox="0 0 18 18" className="ml-[20px] mt-[9px]">
        <circle cx="9" cy="9" r="8.300" fill="none" stroke="#4f5964" strokeWidth="1.300" />
        <path d="M4 9H14" stroke="#4f5964" strokeWidth="2.200" />
      </svg>
      <div className="relative ml-[7px] h-[5px] w-[150px] rounded-full border-t border-t-[#8e9aa8] bg-[#e4e9ee]">
        <svg width="12" height="22" viewBox="0 0 12 22" className="absolute -top-[9px] left-[69px]">
          <path d="M.7 .7H11.300V16.500L6 21.300L.7 16.500Z" fill="#efefef" stroke="#83878d" strokeWidth="1.200" />
        </svg>
      </div>
      <svg width="9" height="18" viewBox="0 0 9 18" className="ml-[5px] mt-[9px]">
        <circle cx="9" cy="9" r="8.300" fill="none" stroke="#4f5964" strokeWidth="1.300" />
        <path d="M4 9H14" stroke="#4f5964" strokeWidth="2.200" />
      </svg>
    </div>
  </div>
);

const Annotations = () => (
  <svg width="560" height="400" viewBox="0 0 560 400" className="pointer-events-none absolute left-0 top-0">
    <g fill="none" stroke="#fb0007" strokeWidth="2">
      <rect x="191" y="27" width="76" height="87" />
      <rect x="273" y="28" width="71" height="84" />
    </g>
    <g stroke="#ff0000" strokeWidth="3.600" strokeLinecap="round">
      <path d="M137 381L216 165" />
      <path d="M508 350L359 158" />
    </g>
    <path d="M221 150L207.500 165.500L216 164L222 171Z" fill="#ff0000" />
    <path d="M350 145L368 155L360 158L353 166Z" fill="#ff0000" />
  </svg>
);

export default function App() {
  return (
    <div className="relative flex h-[1005px] w-[1903px] flex-col overflow-hidden bg-[#c2d4ec] font-['Noto_Sans','Noto_Sans_CJK_SC',sans-serif] text-[14.8px] text-black">
      <Defs />
      <div className="h-[2px] shrink-0 bg-[#ff22ff]" />
      <TabBar />
      <Ribbon />
      <div className="flex h-[833px] shrink-0">
        <Sidebar />
        <div className="flex min-w-0 flex-1 flex-col border-l border-l-[#8493a8] bg-[#c3d3e5] pt-px">
          <AnalysisBar />
          <DocTabs />
          <FormArea />
          <div className="h-[5px] shrink-0" />
          <Palette />
        </div>
      </div>
      <StatusBar />
      <Annotations />
    </div>
  );
}
